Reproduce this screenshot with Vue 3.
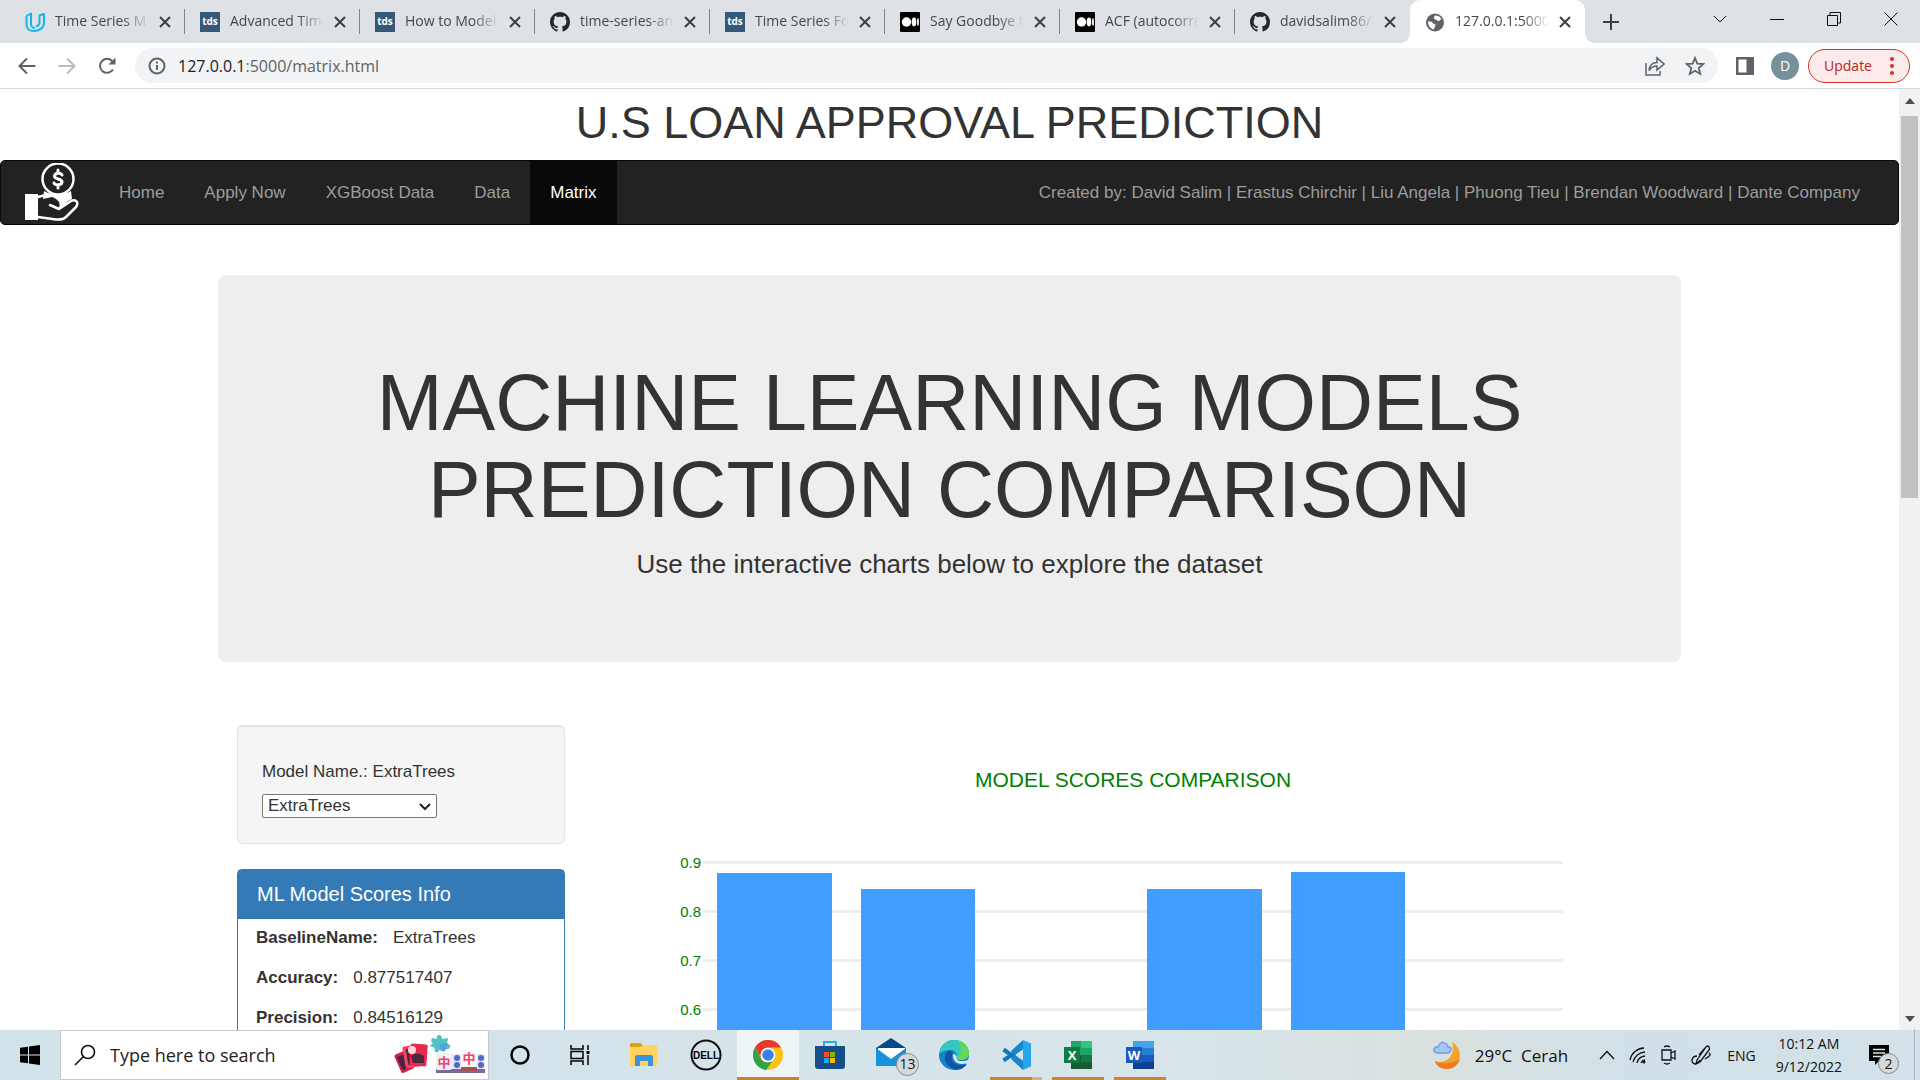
<script setup>
import { ref, computed } from 'vue'

const tabs = [
  { icon: 'udacity', title: 'Time Series Mo' },
  { icon: 'tds', title: 'Advanced Time' },
  { icon: 'tds', title: 'How to Model T' },
  { icon: 'github', title: 'time-series-ana' },
  { icon: 'tds', title: 'Time Series For' },
  { icon: 'medium', title: 'Say Goodbye to' },
  { icon: 'medium', title: 'ACF (autocorrel' },
  { icon: 'github', title: 'davidsalim86/U' },
  { icon: 'globe', title: '127.0.0.1:5000/', active: true }
]

const links = ['Home', 'Apply Now', 'XGBoost Data', 'Data', 'Matrix']

const model = ref('ExtraTrees')
const scores = computed(() => [
  { label: 'BaselineName:', value: model.value },
  { label: 'Accuracy:', value: '0.877517407' },
  { label: 'Precision:', value: '0.84516129' }
])

const ticks = ['0.9', '0.8', '0.7', '0.6']
const axisMax = 0.9
const bars = [0.8775, 0.845, 0, 0.845, 0.8798, 0]
const barHeight = v => `${(v / axisMax) * 100}%`
</script>

<template>
  <div class="desktop">
    <header class="tabstrip">
      <div v-for="(t, i) in tabs" :key="i" class="tab" :class="{ active: t.active, last: i === 7 }">
        <svg v-if="t.icon === 'udacity'" class="fav" viewBox="0 0 20 20" fill="none" stroke="#16b5e8" stroke-width="2" stroke-linejoin="round">
          <path d="M1.500 4 6 1.500V12a4 4 0 0 0 4 4M1.500 4v8.500C1.500 17 5 19 9 19c5 0 10-3 10-8V2l-4.500 1.500V10c0 2.500-1.500 4-3.500 4.500" />
        </svg>
        <span v-else-if="t.icon === 'tds'" class="fav tds">tds</span>
        <svg v-else-if="t.icon === 'github'" class="fav" viewBox="0 0 16 16" fill="#24292f">
          <path d="M8 0C3.580 0 0 3.580 0 8c0 3.540 2.290 6.530 5.470 7.590.4.070.55-.17.55-.38 0-.19-.01-.82-.01-1.490-2.010.37-2.530-.49-2.690-.94-.09-.23-.48-.94-.82-1.130-.28-.15-.68-.52-.01-.53.63-.01 1.080.58 1.230.82.72 1.210 1.870.87 2.330.66.07-.52.28-.87.51-1.070-1.780-.2-3.640-.89-3.640-3.950 0-.87.31-1.590.82-2.150-.08-.2-.36-1.020.08-2.120 0 0 .67-.21 2.200.82.64-.18 1.320-.27 2-.27s1.360.09 2 .27c1.530-1.040 2.200-.82 2.200-.82.44 1.100.16 1.920.08 2.120.51.56.82 1.270.82 2.150 0 3.070-1.870 3.750-3.650 3.950.29.25.54.73.54 1.480 0 1.070-.01 1.930-.01 2.200 0 .21.15.46.55.38A8.010 8.010 0 0 0 16 8c0-4.420-3.580-8-8-8z" />
        </svg>
        <svg v-else-if="t.icon === 'medium'" class="fav" viewBox="0 0 20 20">
          <rect width="20" height="20" rx="1" /><g fill="#fff"><circle cx="6.500" cy="10" r="4.700" /><ellipse cx="14" cy="10" rx="2.300" ry="4.400" /><ellipse cx="18" cy="10" rx=".9" ry="3.900" /></g>
        </svg>
        <svg v-else class="fav" viewBox="0 0 20 20">
          <circle cx="10" cy="10.500" r="9" fill="#5f6368" />
          <path fill="#fff" d="M3 9.500c2.500 0 4.500 0 5 1.500s2.500.5 2.500 2-1.500 2-1.500 4.500C5.500 17 3 13.500 3 9.500zM10 3.500c3 0 5 1 6.500 3.500-1.500.5-1.500 2-3 2S12 7.500 10.500 7.500 9 6 9 5z" />
        </svg>
        <span class="tab-title">{{ t.title }}</span>
        <button class="tab-close" aria-label="Close tab"><svg viewBox="0 0 12 12" width="12" height="12" stroke="#3c4043" stroke-width="2"><path d="M1 1l10 10M11 1 1 11" /></svg></button>
      </div>
      <button class="new-tab" aria-label="New tab"><svg width="16" height="16" viewBox="0 0 16 16" stroke="#3c4043" stroke-width="2"><path d="M8 0v16M0 8h16" /></svg></button>
      <div class="win">
        <button aria-label="Search tabs"><svg width="14" height="14" viewBox="0 0 14 14"><path d="M1 4l6 6 6-6" /></svg></button>
        <button aria-label="Minimize"><svg width="14" height="14" viewBox="0 0 14 14"><path d="M0 7.500h14" /></svg></button>
        <button aria-label="Restore"><svg width="14" height="14" viewBox="0 0 14 14"><path d="M.5 3.500h10v10H.5zM3 3.500V.5h10.500v10.500h-3" /></svg></button>
        <button aria-label="Close"><svg width="14" height="14" viewBox="0 0 14 14"><path d="M.5.5l13 13M13.500.5l-13 13" /></svg></button>
      </div>
    </header>

    <div class="toolbar">
      <button class="tool" aria-label="Back"><svg width="18" height="18" viewBox="0 0 18 18" stroke="#5f6368"><path d="M17.500 9H2M9 1.500 1.500 9 9 16.500" /></svg></button>
      <button class="tool" aria-label="Forward"><svg width="18" height="18" viewBox="0 0 18 18" stroke="#babcbe"><path d="M.5 9H16M9 1.500 16.500 9 9 16.500" /></svg></button>
      <button class="tool" aria-label="Reload"><svg width="18" height="18" viewBox="0 0 18 18" stroke="#5f6368"><path d="M15 12.500A7 7 0 1 1 14.500 4.500L16 6" /><path d="M17.500.5v7h-7z" fill="#5f6368" stroke="none" /></svg></button>
      <div class="omnibox">
        <svg width="18" height="18" viewBox="0 0 18 18" fill="none" stroke="#5f6368" stroke-width="2"><circle cx="9" cy="9" r="7.500" /><path d="M9 8v5M9 4.500v2" /></svg>
        <div class="url"><b>127.0.0.1</b>:5000/matrix.html</div>
        <svg class="share" width="20" height="20" viewBox="0 0 20 20" fill="none" stroke="#5f6368" stroke-width="1.500"><path d="M1 7v12h14v-4M4 14.500c.5-5 3-8 8-8V2l7 6-7 6V10c-3.500 0-6 1.500-8 4.500z" /></svg>
        <svg width="20" height="20" viewBox="0 0 20 20" fill="none" stroke="#5f6368" stroke-width="1.800"><path d="M10 2l2.300 5.600 6 .5-4.600 3.900 1.500 5.900-5.200-3.200-5.200 3.200 1.500-5.900L1.700 8.100l6-.5z" /></svg>
      </div>
      <svg class="side" width="18" height="18" viewBox="0 0 18 18"><path fill="#5f6368" d="M0 0h18v18H0zM2.500 2.500v13h8v-13z" fill-rule="evenodd" /></svg>
      <span class="avatar">D</span>
      <button class="update">Update<svg width="4" height="18" viewBox="0 0 4 18" fill="#d93025"><circle cx="2" cy="2" r="2" /><circle cx="2" cy="9" r="2" /><circle cx="2" cy="16" r="2" /></svg></button>
    </div>

    <div class="viewport">
      <main class="page">
        <h1 class="site-title">U.S LOAN APPROVAL PREDICTION</h1>
        <nav class="navbar">
          <a href="#" class="brand" aria-label="Loan approval home">
            <svg width="54" height="60" viewBox="0 0 54 60" fill="none" stroke="#fff" stroke-width="2.500" stroke-linejoin="round" stroke-linecap="round">
              <path fill="#fff" stroke="none" d="M18 36l1-8q14 8 27 0l1 8-4 2-5 5-4-6-7-3z" />
              <circle cx="33" cy="16" r="15.500" fill="#222" />
              <path d="M37 12c-1-2.500-7-2.500-7.500 1s7.500 2.500 7.500 6-7 3.500-8 1M33 7v3M33 22v3" stroke-width="3" />
              <path fill="#fff" stroke="none" d="M0 31h13v26H0z" />
              <path d="M13 34q12-4 18 0l4 4q2 6-1 8l-9-4M34 46l12-8q4-2 6 1 1 2-1 5L41 54q-3 3-10 2.500L13 54" />
            </svg>
          </a>
          <a v-for="l in links" :key="l" href="#" class="nav-link" :class="{ current: l === 'Matrix' }">{{ l }}</a>
          <span class="credits">Created by: David Salim | Erastus Chirchir | Liu Angela | Phuong Tieu | Brendan Woodward | Dante Company</span>
        </nav>

        <div class="container">
          <section class="jumbotron">
            <h1>MACHINE LEARNING MODELS PREDICTION COMPARISON</h1>
            <p>Use the interactive charts below to explore the dataset</p>
          </section>

          <div class="row">
            <aside class="sidebar">
              <div class="well">
                <label for="model">Model Name.: {{ model }}</label>
                <div class="select">
                  <select id="model" v-model="model"><option>ExtraTrees</option></select>
                  <svg width="12" height="8" viewBox="0 0 12 8" fill="none" stroke="#222" stroke-width="2"><path d="M1 1l5 5 5-5" /></svg>
                </div>
              </div>
              <section class="panel">
                <h3>ML Model Scores Info</h3>
                <dl>
                  <div v-for="s in scores" :key="s.label"><dt>{{ s.label }}</dt><dd>{{ s.value }}</dd></div>
                </dl>
              </section>
            </aside>

            <section class="chart">
              <h2>MODEL SCORES COMPARISON</h2>
              <div class="plot">
                <div class="grid"><div v-for="t in ticks" :key="t" class="tick"><span>{{ t }}</span><i></i></div></div>
                <div class="bars"><div v-for="(b, i) in bars" :key="i" class="slot"><div class="bar" :style="{ height: barHeight(b) }"></div></div></div>
              </div>
            </section>
          </div>
        </div>
      </main>
      <div class="scrollbar">
        <svg width="10" height="6" viewBox="0 0 10 6" fill="#505050"><path d="M0 6 5 0l5 6z" /></svg>
        <div class="track"><div class="thumb"></div></div>
        <svg width="10" height="6" viewBox="0 0 10 6" fill="#505050"><path d="M0 0l5 6 5-6z" /></svg>
      </div>
    </div>

    <footer class="taskbar">
      <button class="start" aria-label="Start"><svg width="20" height="20" viewBox="0 0 20 20"><path d="M0 2.800 8 1.700v7.800H0zM9 1.500 20 0v9.500H9zM0 10.500h8v7.800l-8-1.100zM9 10.500h11V20L9 18.500z" /></svg></button>
      <div class="search">
        <svg width="22" height="22" viewBox="0 0 22 22" fill="none" stroke="#111" stroke-width="1.600"><circle cx="14" cy="8" r="6.500" /><path d="M9.500 12.500 1 21" /></svg>
        <input type="text" placeholder="Type here to search" aria-label="Type here to search" />
        <svg class="art" width="92" height="44" viewBox="0 0 92 44">
          <g transform="rotate(-24 12 30)"><rect x="4" y="18" width="14" height="20" rx="2" fill="#d52045" /><rect x="6" y="21" width="10" height="14" fill="#4b2440" /></g>
          <g transform="rotate(-10 20 24)"><rect x="10" y="12" width="16" height="22" rx="2" fill="#fb4264" /><rect x="13" y="15" width="10" height="16" fill="#5c2642" /></g>
          <rect x="16" y="11" width="17" height="22" rx="2" fill="#e52a51" transform="rotate(4 25 23)" /><path d="M17 23q6-5 13 0v7H19z" fill="#4c2940" /><circle cx="18" cy="17" r="4" fill="#ffdbe0" />
          <path d="M38 5l5 1q-1-4 2-4t3 4l6-1-1 6q4 0 3 3t-4 2l-2 3-5-2q0 3-3 2t-1-4l-5-2 3-3q-3-1-1-5z" fill="#4fc4bf" /><path d="M46 11l8-1-3 8-5-2z" fill="#54a1e5" />
          <rect x="57" y="21" width="12" height="18" rx="2" fill="#e4e4f0" /><rect x="80" y="21" width="11" height="18" rx="2" fill="#e4e4f0" /><path d="M42 36h49v4H42z" fill="#7b6a9e" />
          <g fill="#5667c0"><circle cx="63" cy="25" r="3" /><circle cx="63" cy="32" r="3" /><circle cx="87" cy="25" r="3" /><circle cx="87" cy="32" r="3" /></g>
          <rect x="42" y="20" width="16" height="17" rx="2" fill="#f1f1f5" /><rect x="67" y="17" width="16" height="19" rx="2" fill="#f7f7fa" /><path d="M67 34h16v4H67z" fill="#a95050" />
          <text x="50" y="34" class="tile">中</text><text x="75" y="30" class="tile">中</text>
        </svg>
      </div>
      <div class="apps">
        <button aria-label="Cortana"><svg width="30" height="30" viewBox="0 0 30 30"><circle cx="15" cy="15" r="8.500" fill="none" stroke="#000" stroke-width="2.500" /></svg></button>
        <button aria-label="Task view"><svg width="30" height="30" viewBox="0 0 30 30" fill="none" stroke="#000" stroke-width="1.500"><path d="M4 5v4h12V5M4 25v-4h12v4M4 11.500h12v7H4zM21 5v5M21 15v10" /><path d="M19.500 11h3v3h-3z" fill="#000" stroke="none" /></svg></button>
        <button aria-label="File Explorer"><svg width="30" height="30" viewBox="0 0 30 30"><path fill="#e0a010" d="M1 4q0-1 1-1h10l2 3v4H1z" /><path fill="#ffd35c" d="M1 7h11l2-2h13q1 0 1 1v20H1z" /><path fill="#3b92d8" d="M6 26v-9q0-2 2-2h14q2 0 2 2v9h-5v-5h-8v5z" /></svg></button>
        <button aria-label="Dell"><svg width="32" height="32" viewBox="0 0 32 32"><circle cx="16" cy="16" r="14.500" fill="none" stroke="#111" stroke-width="2" /><text x="16" y="20" class="dell">DELL</text></svg></button>
        <button class="focused running" aria-label="Chrome"><svg width="30" height="30" viewBox="0 0 30 30"><circle cx="15" cy="15" r="15" fill="#fbc116" /><path fill="#e33b2e" d="M2 7.500A15 15 0 0 1 28 7.500H15a7.500 7.500 0 0 0-6.500 11.200z" /><path fill="#2ba24c" d="M2 7.500a15 15 0 0 0 11 22.400l7.500-10.400a7.500 7.500 0 0 1-12 .2z" /><circle cx="15" cy="15" r="7.300" fill="#fff" /><circle cx="15" cy="15" r="5.800" fill="#397ff0" /></svg></button>
        <button aria-label="Store"><svg width="30" height="30" viewBox="0 0 30 30"><path d="M9 7V2h12v5" fill="none" stroke="#29aee8" stroke-width="2" /><path fill="#174e87" d="M0 6h30v20q0 3-3 3H3q-3 0-3-3z" /><path fill="#f25022" d="M9 12h5v5H9z" /><path fill="#7fba00" d="M15 12h5v5h-5z" /><path fill="#1aa9f0" d="M9 18h5v5H9z" /><path fill="#ffb900" d="M15 18h5v5h-5z" /></svg></button>
        <button aria-label="Mail"><svg width="46" height="36" viewBox="0 0 46 36"><path fill="#074986" d="M7 11 22 1l15 10v4H7z" /><path fill="#fff" d="M9 11h27v9L22 25 9 17z" /><path fill="#1a91dd" d="M7 11l15 11L37 11v18H7z" /></svg><span class="badge">13</span></button>
        <button aria-label="Edge"><svg width="30" height="30" viewBox="0 0 30 30"><circle cx="15" cy="15" r="15" fill="#1583c9" /><path fill="#35c8c1" d="M0 14C1 5 8 0 15 0c10 0 15 7 15 13 0 5-4 7-8 7-5 0-4-2-4-4 0-3-2-6-7-6-5 0-9 2-11 4z" /><path fill="#65d84f" d="M19 1c7 1 11 7 11 12 0 5-4 7-8 7-2 0-3 0-3-2 3-5 5-11 0-17z" /><path fill="#0d56a5" d="M11 10c-8 3-7 16 6 20 5 0 9-3 11-6-9 3-18-1-14-11z" /><path fill="#d7e5ea" d="M14 14c-1 5 3 10 9 10 3 0 5-1 6-2l1-3c-2 2-5 2-8 2s-5-2-4-4c-1-2-2-3-4-3z" /></svg></button>
        <button class="running split" aria-label="Visual Studio Code"><svg width="30" height="30" viewBox="0 0 30 30"><path fill="none" stroke="#0f79bf" stroke-width="4" stroke-linejoin="round" d="M23 24 2.500 9.500M23 6 2.500 20.500" /><path fill="#29a5ec" d="M22 0l8 3.500v23L22 30z" /><path fill="#1788ce" d="M22 0v9l-8 6-4-4zM22 30v-9l-8-6-4 4z" /></svg></button>
        <button class="running" aria-label="Excel"><svg width="30" height="30" viewBox="0 0 30 30"><path fill="#23a366" d="M8 1h21v28H8z" /><path fill="#33c481" d="M18 1h11v7H18z" /><path fill="#185c37" d="M8 15h21v14H8z" /><path fill="#107c41" d="M18 15h11v7H18zM1 7h16v16H1z" /><text x="9" y="20" class="office">X</text></svg></button>
        <button class="running" aria-label="Word"><svg width="30" height="30" viewBox="0 0 30 30"><path fill="#41a5ee" d="M8 1h21v7H8z" /><path fill="#2b7cd3" d="M8 8h21v7H8z" /><path fill="#185abd" d="M8 15h21v7H8z" /><path fill="#103f91" d="M8 22h21v7H8z" /><path fill="#185abd" d="M1 7h16v16H1z" /><text x="9" y="20" class="office">W</text></svg></button>
      </div>
      <div class="tray">
        <svg width="28" height="28" viewBox="0 0 28 28"><path fill="#f5a426" d="M19 1C32 9 28 28 14 28 7 28 3 24 2 20 14 24 23 14 19 1z" /><path fill="#ef7a24" d="M2 20c9 4 19 2 25-2-2 6-7 10-13 10C7 28 3 24 2 20z" /><path fill="#a8c6f5" stroke="#6d9be8" d="M4 12q-4-1-3-4t4-2q2-6 7-4 3 1 3 4 4 0 3 3t-3 3z" /></svg>
        <span class="weather">29°C&nbsp; Cerah</span>
        <svg class="up" width="16" height="10" viewBox="0 0 16 10"><path d="M1 9l7-7.500L15 9" /></svg>
        <svg width="18" height="18" viewBox="0 0 18 18"><path d="M1 14A15 15 0 0 1 15 2M4 16A13 13 0 0 1 16 6M8 17a9 9 0 0 1 8-7M12 17a5 5 0 0 1 4-3" /><circle cx="15" cy="16" r="1.500" fill="#111" stroke="none" /></svg>
        <svg width="16" height="20" viewBox="0 0 16 20"><path d="M1 5h9v10H1zM10 8l4-2v8l-4-2M3 2q3-2 6 0M3 18q3 2 6 0" /></svg>
        <svg width="22" height="20" viewBox="0 0 22 20"><path d="M6 15 15 2q2-2 3 0t0 3L9 17l-4 2zM14 3l-6 7M6 11c-5 0-6 5-4 7s5 0 7-3M14 14c3-2 7-4 4-6" /></svg>
        <span class="lang">ENG</span>
        <div class="clock"><span>10:12 AM</span><span>9/12/2022</span></div>
        <div class="notify"><svg width="22" height="20" viewBox="0 0 22 20"><path d="M0 0h20v16H10l-4 4v-4H0z" fill="#000" stroke="none" /><path d="M4 4.500h12M4 8h12M4 11.500h8" stroke="#d5e2e8" /></svg><span class="badge">2</span></div>
      </div>
    </footer>
  </div>
</template>

<style>
body { margin: 0; overflow: hidden; }
</style>

<style scoped>
* { box-sizing: border-box; }
button { border: 0; padding: 0; background: none; font: inherit; color: inherit; display: flex; align-items: center; justify-content: center; }
h1, h2, h3, p, dl, dd { margin: 0; font-weight: 400; }
svg { flex: none; display: block; }
.desktop { height: 100vh; display: flex; flex-direction: column; background: #fff; font-family: "Open Sans", "Noto Sans", sans-serif; }

.tabstrip { flex: none; height: 43px; display: flex; background: #dee1e6; padding: 0 1px 0 10px; }
.tab { position: relative; flex: 0 1 175px; min-width: 0; display: flex; align-items: center; gap: 10px; padding: 0 14px 0 15px; font-size: 14px; color: #45484c; }
.tab:not(.active):not(.last)::after { content: ""; position: absolute; right: 0; top: 9px; width: 1px; height: 25px; background: #80868b; }
.active { background: #fff; border-radius: 10px 10px 0 0; }
.active::before, .active::after { content: ""; position: absolute; bottom: 0; width: 10px; height: 10px; }
.active::before { left: -10px; background: radial-gradient(circle at 0 0, transparent 10px, #fff 10px); }
.active::after { right: -10px; background: radial-gradient(circle at 100% 0, transparent 10px, #fff 10px); }
.fav { flex: none; width: 20px; height: 20px; }
.tds { background: #355876; color: #fff; font-size: 10px; font-weight: 700; line-height: 19px; text-align: center; }
.tab-title { flex: 1; min-width: 0; overflow: hidden; white-space: nowrap; line-height: 22px; padding-bottom: 2px; mask-image: linear-gradient(to right, #000 72%, transparent); }
.new-tab { width: 52px; }
.win { margin-left: auto; display: flex; height: 38px; }
.win button { width: 57px; }
.win svg { fill: none; stroke: #111; stroke-width: 1; }

.toolbar { flex: none; height: 46px; display: flex; align-items: center; padding: 0 10px 0 7px; border-bottom: 1px solid #d5d7da; }
.tool { width: 40px; height: 34px; }
.tool svg { fill: none; stroke-width: 2; }
.omnibox { flex: 1; height: 35px; margin-left: 8px; border-radius: 18px; background: #f1f3f4; display: flex; align-items: center; padding: 0 13px; gap: 12px; }
.url { flex: 1; font-size: 16px; color: #5f6368; }
.url b { font-weight: 400; color: #202124; }
.share { margin-right: 8px; }
.side { margin: 0 17px 0 18px; }
.avatar { width: 28px; height: 28px; border-radius: 50%; background: #78909c; color: #fff; font-size: 14px; line-height: 28px; text-align: center; }
.update { width: 102px; height: 34px; margin-left: 9px; border: 1px solid #d93025; border-radius: 17px; background: #fcebea; color: #b9231b; font-size: 14px; gap: 18px; }

.viewport { flex: 1; min-height: 0; display: flex; }
.page { flex: 1; min-width: 0; overflow: hidden; font-family: "Liberation Sans", Arial, sans-serif; font-size: 17px; line-height: 25px; color: #333; }
.site-title { margin: 9px 0 12px; font-size: 45px; line-height: 50px; text-align: center; }
.navbar { display: flex; height: 65px; background: #222; border: 1px solid #080808; border-radius: 5px; color: #9d9d9d; margin-bottom: 50px; }
.brand { padding: 2px 20px 0 24px; }
.nav-link { padding: 19px 20px; color: #9d9d9d; text-decoration: none; white-space: nowrap; }
.current { background: #080808; color: #fff; }
.credits { margin-left: auto; padding: 19px 38px 0 0; white-space: nowrap; }
.container { max-width: 1463px; margin: 0 auto; }
.jumbotron { padding: 84px 75px 79px; border-radius: 8px; background: #eee; text-align: center; margin-bottom: 63px; }
.jumbotron h1 { font-size: 79px; line-height: 87px; margin-bottom: 13px; }
.jumbotron p { font-size: 26px; line-height: 37px; }
.row { display: flex; padding: 0 19px; }
.sidebar { flex: none; width: 328px; }
.well { height: 119px; padding: 33px 24px 0; border: 1px solid #e3e3e3; border-radius: 5px; background: #f5f5f5; box-shadow: inset 0 1px 1px #00000012; margin-bottom: 25px; }
.well label { display: block; margin-bottom: 10px; }
.select { position: relative; width: 175px; }
.select select { appearance: none; display: block; width: 100%; height: 24px; padding: 0 5px; border: 1px solid #767676; border-radius: 2px; background: #fff; color: #333; font: inherit; line-height: 22px; }
.select svg { position: absolute; right: 6px; top: 9px; pointer-events: none; }
.panel { border: 1px solid #337ab7; border-radius: 5px; }
.panel h3 { height: 49px; padding: 13px 19px; background: #337ab7; color: #fff; font-size: 20px; line-height: 22px; }
.panel dl { padding: 6px 18px; }
.panel dl div { display: flex; gap: 15px; margin-bottom: 15px; }
.panel dt { font-weight: 700; }
.chart { flex: 1; min-width: 0; padding: 43px 99px 0 113px; }
.chart h2 { padding-left: 25px; text-align: center; font-size: 21px; line-height: 24px; color: green; }
.plot { display: grid; height: 438px; margin-top: 69px; }
.grid, .bars { grid-area: 1 / 1; }
.tick { height: 49px; display: flex; font-size: 15px; line-height: 3px; color: green; }
.tick span { width: 25px; padding-right: 2px; text-align: right; }
.tick i { flex: 1; height: 3px; background: #eee; }
.bars { display: flex; margin: 1px 0 0 25px; }
.slot { flex: 1; display: flex; align-items: flex-end; justify-content: center; }
.bar { width: 80%; background: #409eff; }
.scrollbar { flex: none; width: 21px; background: #f1f1f1; display: flex; flex-direction: column; align-items: center; padding: 9px 2px 8px; }
.track { flex: 1; align-self: stretch; padding: 12px 0; }
.thumb { height: 43%; background: #c1c1c1; }

.taskbar { flex: none; height: 50px; display: flex; background: linear-gradient(90deg, #d2e2e9, #d7e5ea 60%, #d9e0df 75%, #d1e0e8 85%, #d3e1e8); color: #111; }
.start { width: 60px; }
.search { width: 429px; display: flex; align-items: center; background: #fff; border: 1px solid #c8c8cc; padding: 0 2px 0 13px; }
.search input { flex: 1; min-width: 0; border: 0; outline: 0; padding: 0 0 0 14px; font: inherit; font-size: 18px; background: none; }
.search input::placeholder { color: #222; opacity: 1; }
.tile { font: 700 13px "Noto Sans CJK SC", sans-serif; fill: #f0436a; text-anchor: middle; }
.dell { font: 700 10px "Liberation Sans", sans-serif; text-anchor: middle; }
.office { font: 700 13px "Open Sans", sans-serif; fill: #fff; text-anchor: middle; }
.apps { display: flex; }
.apps button { position: relative; width: 62px; }
.focused { background: #edf4f7; }
.running::after { content: ""; position: absolute; left: 5px; right: 5px; bottom: 0; height: 3px; background: #cc8429; }
.focused::after { left: 0; right: 0; }
.split::after { background: linear-gradient(90deg, #cc8429 80%, #d9b27c 80%); }
.badge { position: absolute; width: 23px; height: 23px; border: 1px solid #888; border-radius: 50%; background: #d5d9dc; font-size: 14px; line-height: 20px; text-align: center; }
.apps .badge { right: 4px; top: 23px; }
.tray { margin-left: auto; display: flex; align-items: center; gap: 14px; }
.tray svg { fill: none; stroke: #111; stroke-width: 1.300; }
.tray svg:first-child { stroke: none; }
.weather { font-size: 17px; }
.up { margin-left: 17px; }
.lang { font-size: 14px; }
.clock { margin-left: 6px; display: flex; flex-direction: column; align-items: center; font-size: 14px; line-height: 23px; }
.notify { position: relative; margin: 0 29px 0 13px; }
.notify::after { content: ""; position: absolute; left: 45px; top: -16px; width: 1px; height: 52px; background: #a9b5bb; }
.notify .badge { left: 9px; top: 8px; width: 21px; height: 21px; line-height: 19px; }
</style>
